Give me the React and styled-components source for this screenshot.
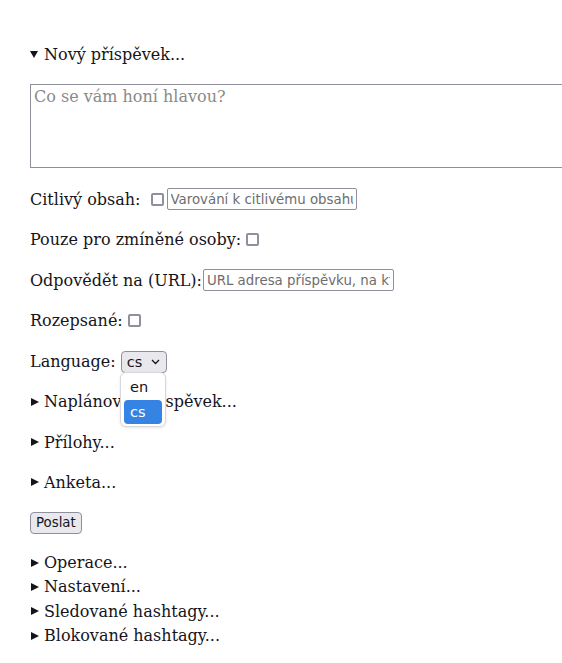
import React from "react";
import styled, { createGlobalStyle } from "styled-components";

const GlobalStyle = createGlobalStyle`
  html, body {
    margin: 0;
    padding: 0;
    background: #fff;
    overflow: hidden;
  }
  body {
    font-family: "DejaVu Serif", serif;
    font-size: 16px;
    color: #15141a;
  }
`;

const Page = styled.div`
  width: 562px;
  height: 663px;
  overflow: hidden;
  padding: 42px 0 0 30px;
  box-sizing: border-box;
`;

const Summary = styled.div`
  display: flex;
  align-items: center;
  height: ${p => (p.$tight ? "24.4px" : "24px")};
  white-space: nowrap;
`;

const Marker = styled.span`
  display: inline-block;
  width: 0;
  height: 0;
  ${p =>
    p.$open
      ? `
    border-left: 4.5px solid transparent;
    border-right: 4.5px solid transparent;
    border-top: 7px solid #15141a;
    margin-right: 6px;
  `
      : `
    border-top: 4px solid transparent;
    border-bottom: 4px solid transparent;
    border-left: 8px solid #15141a;
    margin-left: 1px;
    margin-right: 5px;
  `}
`;

const Compose = styled.textarea`
  display: block;
  width: 620px;
  height: 84px;
  margin: 18px 0 19px;
  box-sizing: border-box;
  border: 1px solid #8f8f9d;
  border-radius: 0;
  padding: 2px 3px;
  font-family: "DejaVu Serif", serif;
  font-size: 16px;
  resize: none;
  &::placeholder {
    color: #8a8a8a;
  }
`;

const Rows = styled.div`
  display: flex;
  flex-direction: column;
  gap: 16.2px;
`;

const Row = styled.div`
  display: flex;
  align-items: center;
  height: 24.4px;
  white-space: nowrap;
  position: relative;
`;

const Check = styled.span`
  display: inline-block;
  width: 13px;
  height: 13px;
  box-sizing: border-box;
  border: 2px solid #8f8f9d;
  border-radius: 2px;
  margin: 0 3px 0 ${p => p.$ml || 3}px;
`;

const TextInput = styled.input`
  width: ${p => p.$w}px;
  height: 22px;
  box-sizing: border-box;
  border: 1px solid #8f8f9d;
  border-radius: 2px;
  padding: 0 3px;
  margin-left: ${p => p.$ml || 0}px;
  font-family: "DejaVu Sans", sans-serif;
  font-size: 13.33px;
  background: #fff;
  &::placeholder {
    color: #6d6d6d;
  }
`;

const Select = styled.div`
  display: flex;
  align-items: center;
  justify-content: space-between;
  width: 46px;
  height: 22px;
  box-sizing: border-box;
  margin-left: 5px;
  padding: 0 6px 0 5px;
  border: 1px solid #8f8f9d;
  border-radius: 4px;
  background: #e9e9ed;
  font-family: "DejaVu Sans", sans-serif;
  font-size: 14.5px;
`;

const Popup = styled.div`
  position: absolute;
  left: 90px;
  top: 23px;
  width: 46px;
  box-sizing: border-box;
  padding: 2px 3px;
  display: flex;
  flex-direction: column;
  gap: 1px;
  background: #fff;
  border: 1px solid #d8d8dc;
  border-radius: 6px;
  box-shadow: 0 1px 3px rgba(0, 0, 0, 0.1);
  z-index: 5;
  font-family: "DejaVu Sans", sans-serif;
  font-size: 14.5px;
`;

const Option = styled.div`
  height: 24px;
  line-height: 24px;
  padding-left: 6px;
  border-radius: 4px;
  color: ${p => (p.$active ? "#fff" : "#15141a")};
  background: ${p => (p.$active ? "#3584e4" : "transparent")};
`;

const Button = styled.button`
  height: 22px;
  padding: 0 5px;
  box-sizing: border-box;
  border: 1px solid #8f8f9d;
  border-radius: 4px;
  background: #e9e9ed;
  color: #15141a;
  font-family: "DejaVu Sans", sans-serif;
  font-size: 13.33px;
`;

const Bottom = styled.div`
  display: flex;
  flex-direction: column;
  margin-top: 15.5px;
`;

const Chevron = () => (
  <svg width="9" height="6" viewBox="0 0 9 6">
    <path d="M1 1l3.5 3.5L8 1" fill="none" stroke="#15141a" strokeWidth="1.3" />
  </svg>
);

const Closed = ({ children, tight }) => (
  <Summary $tight={tight}>
    <Marker />
    {children}
  </Summary>
);

export default function App() {
  return (
    <>
      <GlobalStyle />
      <Page>
        <Summary>
          <Marker $open />
          Nový příspěvek...
        </Summary>
        <Compose placeholder="Co se vám honí hlavou?" />
        <Rows>
          <Row>
            Citlivý obsah:
            <Check $ml={10} />
            <TextInput $w={190} placeholder="Varování k citlivému obsahu" />
          </Row>
          <Row>
            Pouze pro zmíněné osoby:
            <Check $ml={5} />
          </Row>
          <Row>
            Odpovědět na (URL):
            <TextInput $w={191} $ml={1} placeholder="URL adresa příspěvku, na který odpovídáte" />
          </Row>
          <Row>
            Rozepsané:
            <Check $ml={5} />
          </Row>
          <Row>
            Language:
            <Select>
              cs
              <Chevron />
            </Select>
            <Popup>
              <Option>en</Option>
              <Option $active>cs</Option>
            </Popup>
          </Row>
          <Closed>Naplánovat příspěvek...</Closed>
          <Closed>Přílohy...</Closed>
          <Closed>Anketa...</Closed>
          <Row>
            <Button>Poslat</Button>
          </Row>
        </Rows>
        <Bottom>
          <Closed tight>Operace...</Closed>
          <Closed tight>Nastavení...</Closed>
          <Closed tight>Sledované hashtagy...</Closed>
          <Closed tight>Blokované hashtagy...</Closed>
        </Bottom>
      </Page>
    </>
  );
}
